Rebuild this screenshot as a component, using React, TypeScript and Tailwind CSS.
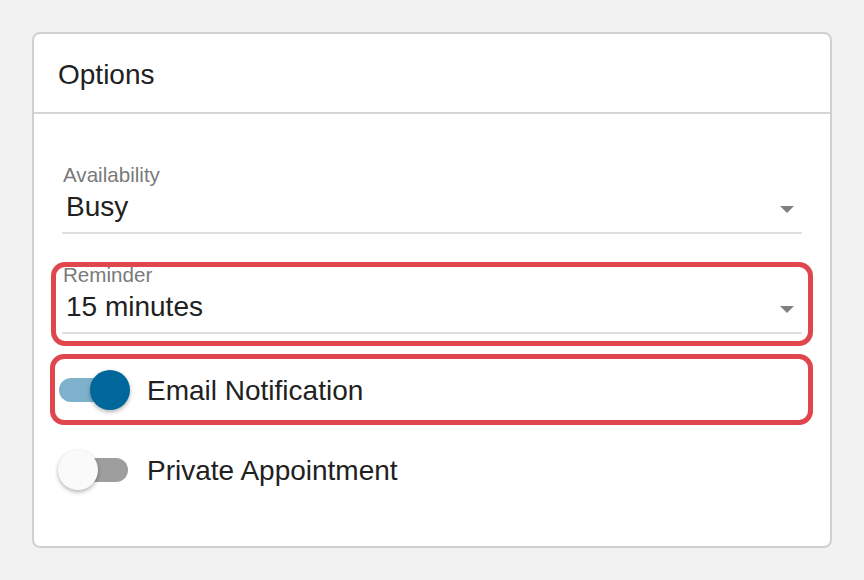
import React from "react";

const font = { fontFamily: '"Liberation Sans", Arial, sans-serif' };

function SelectField({ label, value }: { label: string; value: string }) {
  return (
    <div className="flex flex-col">
      <div className="pl-[1px] text-[20.6px] leading-[24px] text-[#7a7a7a]">{label}</div>
      <div className="mt-[3px] flex h-[32px] items-center justify-between">
        <span className="pl-[4px] pt-[2px] text-[28px] leading-[32px] text-[#212121]">{value}</span>
        <span className="mr-[8px] mt-[7px] h-0 w-0 border-l-[7px] border-r-[7px] border-t-[7px] border-l-transparent border-r-transparent border-t-[#808080]" />
      </div>
      <div className="mt-[10px] h-[2px] bg-[#e0e0e0]" />
    </div>
  );
}

function Toggle({ on, label }: { on: boolean; label: string }) {
  return (
    <div className="flex h-[60px] items-center">
      <div className="relative ml-[-4px] h-[40px] w-[72px] shrink-0">
        <div
          className={
            "absolute left-[1px] right-[2px] top-[8px] h-[24px] rounded-full " +
            (on ? "bg-[#7fb1cc]" : "bg-[#9e9e9e]")
          }
        />
        <div
          className={
            "absolute top-0 h-[40px] w-[40px] rounded-full shadow-[0_2px_4px_rgba(0,0,0,0.3)] " +
            (on ? "left-[32px] bg-[#00679a]" : "left-0 bg-[#fafafa]")
          }
        />
      </div>
      <span className="ml-[17px] pt-[2px] text-[28px] leading-[32px] text-[#212121]">{label}</span>
    </div>
  );
}

export default function App() {
  return (
    <div className="min-h-screen bg-[#f2f2f2] pl-[32px] pt-[32px]" style={font}>
      <div className="h-[516px] w-[800px] rounded-[8px] border-2 border-[#d0d0d0] bg-white">
        <div className="h-[80px] border-b-2 border-[#d6d6d6] pl-[24px] pt-[25px]">
          <span className="text-[28px] leading-[32px] text-[#212121]">Options</span>
        </div>
        <div className="px-[28px] pt-[49px]">
          <SelectField label="Availability" value="Busy" />
          <div className="relative mt-[29px]">
            <SelectField label="Reminder" value="15 minutes" />
            <div className="pointer-events-none absolute bottom-[-12px] left-[-11px] right-[-11px] top-[-1px] rounded-[14px] border-[5px] border-[#e0464e]" />
          </div>
          <div className="relative mt-[26px]">
            <Toggle on={true} label="Email Notification" />
            <div className="pointer-events-none absolute bottom-[-5px] left-[-12px] right-[-11px] top-[-6px] rounded-[14px] border-[5px] border-[#e0464e]" />
          </div>
          <div className="mt-[20px]">
            <Toggle on={false} label="Private Appointment" />
          </div>
        </div>
      </div>
    </div>
  );
}
